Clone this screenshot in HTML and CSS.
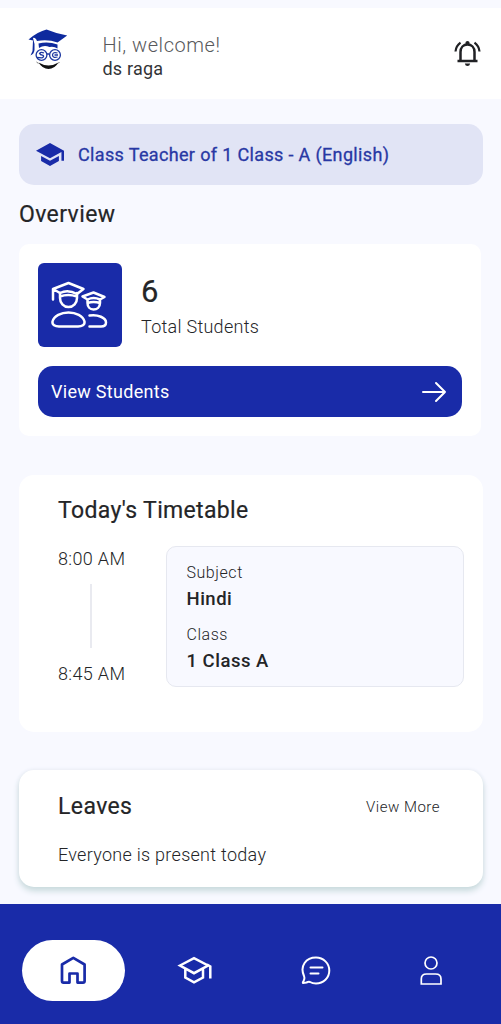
FILE: index.html
```html
<!DOCTYPE html>
<html lang="en">
<head>
<meta charset="utf-8">
<meta name="viewport" content="width=device-width, initial-scale=1">
<title>Teacher Dashboard</title>
<link rel="stylesheet" href="styles.css">
</head>
<body>
<div class="app">
  <header class="header">
    <svg class="logo" viewBox="25 25 46 46" width="46" height="46">
      <g fill="#0e2a9e">
        <path d="M28.500 39.500 Q38 31.500 46.500 29.500 Q56 33.500 67.200 35.500 L57.500 42.500 Q48 39 37 41 L36 39 Q34 37 33 38 L34.500 44 L34.500 50 Q34 54 30.500 55.500 L32.500 51 L33 40.500Z"/>
        <path d="M38.500 43.500 Q48 41 57.500 44.500 L57.500 48.500 Q54 46 49.500 47 Q44 44.500 39 48Z"/>
      </g>
      <g fill="none" stroke="#1c37a0" stroke-width="1.300">
        <circle cx="41.500" cy="55" r="5.400"/><circle cx="55" cy="55" r="5.400"/>
        <path d="M47 54 H49.500 M44 53 Q41 51.500 39.500 53.300 Q40 55 43 55.300 Q44.500 57 42 57.800 L37 57.500 M57.500 53 Q53 51.500 52.500 55 Q52.800 58.500 57.500 57 M54.500 55H58"/>
      </g>
      <path d="M38.500 62.500 Q48.500 68.500 58.500 62.500 Q54.500 69 48.500 69 Q42.500 69 38.500 62.500Z" fill="#111"/>
      <path d="M36.500 62 L38.500 63.500 M58 63.500 L59.500 62" stroke="#555" stroke-width=".8"/>
    </svg>
    <div class="greeting"><div class="hello">Hi, welcome!</div><div class="user">ds raga</div></div>
    <svg class="bell" viewBox="453 38 28 30" width="28" height="30" fill="none" stroke="#202124" stroke-width="2.500">
      <path d="M457.500 61 H477.500 M460.500 60.500 V52 C460.500 47.500 463.500 44.500 467.500 44.500 C471.500 44.500 474.500 47.500 474.500 52 V60.500"/>
      <path d="M465.500 44 V42.500 Q465.500 41 467.500 41 Q469.500 41 469.500 42.500 V44Z M464.800 63.500 H470.200 Q469.700 66 467.500 66 Q465.300 66 464.800 63.500Z" fill="#202124" stroke="none"/>
      <path d="M455.500 51.500 Q456 46 460.500 42.700 M479.500 51.500 Q479 46 474.500 42.700" stroke-width="2.200"/>
    </svg>
  </header>

  <main class="main">
    <div class="role">
      <svg viewBox="1 3 22 18" width="28" height="23"><path d="M5 13.180v4L12 21l7-3.820v-4L12 17l-7-3.820zM12 3L1 9l11 6 9-4.910V17h2V9L12 3z" fill="#192ba8"/></svg>
      <span>Class Teacher of 1 Class - A (English)</span>
    </div>
    <h2 class="title overview-title">Overview</h2>
    <section class="card overview">
      <div class="stat">
        <div class="stat-icon">
          <svg viewBox="38 263 84 84" width="84" height="84" fill="none" stroke="#fff" stroke-width="2.500" stroke-linejoin="round" stroke-linecap="round">
            <path d="M53 289 L68.500 283 L83.500 289 L77 294 Q68 289 60 293 L53 289 V299.500"/>
            <path d="M60 293 V298 C60 303 63.500 307 68.500 307 C73.500 307 77 303 77 298 V293 M60 296.500 Q68 293.500 77 296.500" />
            <path d="M82.500 296.500 L93.500 292.500 L104.500 297 L100 299.500 Q93.500 296.500 87.500 299.500 Z M87.500 300 V303 C87.500 307 90 309.500 93.500 309.500 C97 309.500 100 307 100 303 V300 M87.500 303 Q93.500 301 100 303"/>
            <path d="M52.500 321.500 C54 316 61 312.500 68.500 312.500 C76 312.500 83 316 84.500 321.500 C85 325 82 326.500 78 326.500 H59 C55 326.500 52 325 52.500 321.500Z M89.500 315.500 C98 314 106 318 106 322.500 Q106 326.500 101 326.500 H89.500"/>
          </svg>
        </div>
        <div><div class="count">6</div><div class="count-label">Total Students</div></div>
      </div>
      <div class="button">
        <span>View Students</span>
        <svg viewBox="0 0 26 22" width="26" height="22" fill="none" stroke="#fff" stroke-width="2" stroke-linecap="round" stroke-linejoin="round"><path d="M2 11H24M15 2L24 11L15 20"/></svg>
      </div>
    </section>

    <section class="card timetable">
      <h2 class="title timetable-title">Today's Timetable</h2>
      <div class="slot">
        <div class="times"><span>8:00 AM</span><i class="line"></i><span>8:45 AM</span></div>
        <div class="lesson">
          <div class="key">Subject</div><div class="value">Hindi</div>
          <div class="key second">Class</div><div class="value class-name">1 Class A</div>
        </div>
      </div>
    </section>

    <section class="card leaves">
      <div class="leaves-head"><h2 class="title leaves-title">Leaves</h2><span class="more">View More</span></div>
      <p class="present">Everyone is present today</p>
    </section>
  </main>

  <nav class="nav">
    <div class="nav-item active">
      <svg viewBox="60 956 28 30" width="28" height="30" fill="none" stroke="#192ba8" stroke-width="2.700" stroke-linejoin="round"><path d="M62 964.500 L73.300 957.800 L84.600 964.500 V981 Q84.600 982.600 83 982.600 H77.500 V973.500 H69.500 V982.600 H63.500 Q62 982.600 62 981Z"/></svg>
    </div>
    <div class="nav-item">
      <svg viewBox="177 956 36 30" width="36" height="30" fill="none" stroke="#fff" stroke-width="2.500"><path d="M180 965.500 L194 958.200 L208 965.500 L194 973.200Z M185.300 968 V977.500 L194 982.300 L203 977.500 V968.500 M210.300 978.500 V966.500 L207 964.500"/></svg>
    </div>
    <div class="nav-item">
      <svg viewBox="300 955 32 32" width="32" height="32" fill="none" stroke="#fff" stroke-width="2" stroke-linecap="round" stroke-linejoin="round"><path d="M303 983 Q302.500 982.500 303.500 981 Q305 978.500 304 976 C299.500 966 306 957.500 316 957.500 C323.500 957.500 329.300 963.500 329.300 970.500 C329.300 978 323.500 983.500 316 983.500 Q312.500 983.500 310 982 Q308.500 981.500 306.500 982.500 L303 983Z M310.500 967.500 H322.500 M310.500 973.500 H318.500"/></svg>
    </div>
    <div class="nav-item">
      <svg viewBox="417 954 28 34" width="28" height="34" fill="none" stroke="#fff" stroke-width="1.700"><circle cx="431" cy="963" r="6"/><path d="M421.300 984 V979 Q421.300 974 426.500 974 H435.500 Q441 974 441 979 V984Z"/></svg>
    </div>
  </nav>
</div>
</body>
</html>
```
FILE: styles.css
```css
* { box-sizing: border-box; }
body { margin: 0; background: #f8f9ff; font-family: Roboto, sans-serif; color: #242527; }
h2, p { margin: 0; }
svg { display: block; flex: none; }
.app { width: 501px; height: 1024px; padding-top: 8px; display: flex; flex-direction: column; overflow: hidden; }
.header { height: 91px; flex: none; background: #fff; display: flex; align-items: flex-start; padding: 17px 20px 0 25px; }
.greeting { margin: 8px auto 0 31.5px; white-space: nowrap; }
.hello { font-size: 20px; line-height: 24px; font-weight: 300; color: #58595c; letter-spacing: .55px; }
.user { font-size: 18px; line-height: 24px; letter-spacing: .2px; color: #333437; }
.bell { margin-top: 13px; }
.main { flex: 1; padding: 25px 18px 0 19px; }
.role { height: 61px; border-radius: 15px; background: #e1e4f5; display: flex; align-items: center; gap: 14px; padding-left: 17px; color: #2838a4; font-size: 18px; font-weight: 400; letter-spacing: .35px; -webkit-text-stroke: .3px #2838a4; }
.title { font-weight: 400; font-size: 23px; line-height: 28px; letter-spacing: .4px; -webkit-text-stroke: .2px #242527; }
.overview-title { margin: 16px 0 15px; }
.card { background: #fff; border-radius: 15px; }
.overview { height: 192px; margin-right: 2px; border-radius: 10px; padding: 19px 19px 0 19px; }
.stat { display: flex; gap: 19px; }
.stat-icon { width: 84px; height: 84px; border-radius: 6px; background: #192ba8; }
.count { font-size: 31px; line-height: 36px; margin-top: 11px; -webkit-text-stroke: .2px #242527; }
.count-label { font-size: 18px; line-height: 24px; font-weight: 300; margin-top: 5px; letter-spacing: .27px; }
.button { height: 51px; margin-top: 19px; border-radius: 15px; background: #192ba8; color: #fff; display: flex; align-items: center; justify-content: space-between; padding: 0 15px 0 13px; font-size: 18px; letter-spacing: .3px; }
.timetable { height: 257px; margin-top: 39px; padding: 22px 19px 0 39px; }
.timetable-title { letter-spacing: .34px; }
.slot { display: flex; margin-top: 21px; justify-content: space-between; }
.times { display: flex; flex-direction: column; font-size: 18px; line-height: 24px; font-weight: 300; letter-spacing: .35px; padding-top: 1px; }
.line { width: 2px; height: 64px; margin: 13px 0 14px 32px; background: #e9eaf0; }
.lesson { width: 298px; height: 141px; border: 1px solid #e6e8f0; border-radius: 10px; background: #f8f9ff; padding: 16px 20px 16px 19.500px; }
.key { font-size: 16px; line-height: 20px; font-weight: 300; letter-spacing: .55px; }
.value { font-size: 18.500px; line-height: 24px; margin-top: 4px; font-weight: 500; letter-spacing: .5px; }
.second { margin-top: 14px; }
.leaves { height: 117px; margin-top: 38px; padding: 23px 43px 0 39px; box-shadow: 0 4px 6px #c8dadc, 0 0 4px #e8ebf3; }
.leaves-head { display: flex; justify-content: space-between; align-items: center; }
.more { font-size: 15px; font-weight: 300; letter-spacing: .5px; }
.present { font-size: 18px; line-height: 24px; margin-top: 22px; font-weight: 300; letter-spacing: .28px; }
.nav { height: 120px; flex: none; background: #192ba8; display: grid; grid-template-columns: 103px 140px 102px 128px; align-items: center; padding: 13px 6px 0 22px; }
.nav-item { height: 61px; display: flex; align-items: center; justify-content: center; }
.active { background: #fff; border-radius: 31px; }
```
